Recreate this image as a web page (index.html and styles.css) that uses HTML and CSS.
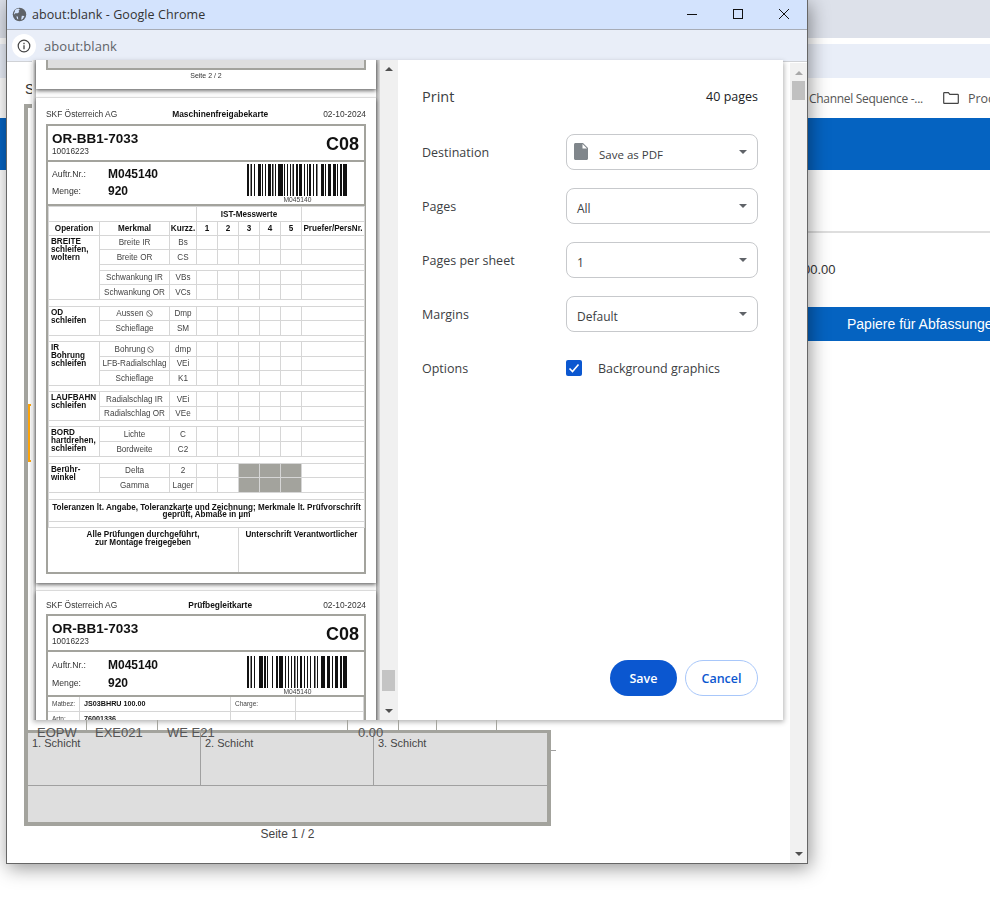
FILE: index.html
```html
<!DOCTYPE html>
<html lang="en">
<head>
<meta charset="utf-8">
<title>about:blank - Google Chrome</title>
<link rel="stylesheet" href="styles.css">
</head>
<body>
<div class="backwin">
  <div class="b-title"></div>
  <div class="b-gap"></div>
  <div class="b-addr"></div>
  <div class="b-marks">
    <span class="b-mark chan">Channel Sequence -...</span>
    <svg class="folder" viewBox="0 0 16 12"><path d="M.7 2V1.200C.7.900.900.700 1.200.700h4.200l1.400 1.600h7.900c.4 0 .6.200.6.600v7.900c0 .4-.2.600-.6.600H1.200c-.3 0-.5-.2-.5-.6z" fill="none" stroke="#444" stroke-width="1.200"/></svg>
    <span class="b-mark">Proc</span>
  </div>
  <div class="b-bar"></div>
  <div class="b-rule"></div>
  <div class="b-amount">00.00</div>
  <div class="b-btn">Papiere für Abfassunge</div>
</div>

<div class="popup">
  <div class="titlebar">
    <svg class="globe" viewBox="0 0 16 16"><circle cx="8" cy="8" r="7.200" fill="#5f6368"/><path d="M3.200 3.400c1-1 2.400-1.700 3.800-1.800l1.300 1-1.300 1.400.7 1.300-1.700 1.300-2.600.1-.6 1.400 2 2 1.500.1.300 3-1.200-.6-.9-2.900-2.300-2.300c0-1.100.3-2.100 1-3zM10.500 9.300l2.800.4-1.800 3-1.800.9z" fill="#d3e3fd"/></svg>
    <span class="title">about:blank - Google Chrome</span>
    <div class="winctl">
      <svg viewBox="0 0 10 10"><path d="M0 5.500h10" stroke="#111" fill="none"/></svg>
      <svg viewBox="0 0 10 10"><rect x=".5" y=".5" width="9" height="9" stroke="#111" fill="none"/></svg>
      <svg viewBox="0 0 10 10"><path d="M0 0l10 10M10 0L0 10" stroke="#111" fill="none"/></svg>
    </div>
  </div>
  <div class="addressbar">
    <span class="infobadge"><svg viewBox="0 0 14 14"><circle cx="7" cy="7" r="5.800" fill="none" stroke="#444" stroke-width="1.200"/><path d="M7 6.200v4M7 3.800v1.400" stroke="#444" stroke-width="1.300"/></svg></span>
    <span class="address">about:blank</span>
  </div>

  <div class="behind">
    <span class="behind-s">S</span>
    <div class="behind-frame"></div>
    <div class="behind-rail"></div>
    <div class="behind-row">
      <div>EOPW</div><div>EXE021</div><div>WE E21</div><div>0.00</div><div></div><div></div><div></div>
    </div>
    <div class="shift-box">
      <div class="shift-cell">1. Schicht</div>
      <div class="shift-cell">2. Schicht</div>
      <div class="shift-cell">3. Schicht</div>
      <div class="shift-foot"></div>
      <i class="shift-tick"></i>
    </div>
    <div class="behind-page">Seite 1 / 2</div>
    <div class="outer-scroll">
      <svg viewBox="0 0 8 4"><path d="M0 4h8L4 0z" fill="#a8a8a8"/></svg>
      <div class="outer-thumb"></div>
      <svg class="arrow-bottom" viewBox="0 0 8 4"><path d="M0 0h8L4 4z" fill="#505050"/></svg>
    </div>
  </div>

  <div class="dialog">
    <div class="preview">
      <div class="pages">
        <div class="sheet sheet-top">
          <div class="top-box"></div>
          <div class="pageno">Seite 2 / 2</div>
        </div>

        <div class="sheet sheet-full">
          <div class="doc-head"><span>SKF Österreich AG</span><b>Maschinenfreigabekarte</b><span>02-10-2024</span></div>
          <div class="frame">
            <div class="part-row">
              <div><div class="part-no">OR-BB1-7033</div><div class="part-sub">10016223</div></div>
              <div class="part-code">C08</div>
            </div>
            <div class="order-row">
              <div class="order-grid">
                <span class="o-label">Auftr.Nr.:</span><span class="o-val">M045140</span>
                <span class="o-label">Menge:</span><span class="o-val">920</span>
              </div>
              <div class="barcode-wrap">
                <svg class="barcode" viewBox="0 0 101 32" preserveAspectRatio="none"><path d="M0 0h2v32H0zM3.500 0H5v32H3.500zM7 0h1v32H7zM11 0h3v32h-3zM15 0h1v32h-1zM18 0h1v32h-1zM21 0h3v32h-3zM25 0h1.500v32H25zM28 0h1v32h-1zM31 0h5v32h-5zM37 0h1v32h-1zM40 0h1v32h-1zM43 0h1v32h-1zM45.500 0H47v32h-1.500zM49 0h2v32h-2zM52 0h3v32h-3zM57 0h1v32h-1zM60 0h1v32h-1zM62 0h2v32h-2zM66 0h1v32h-1zM69 0h1.500v32H69zM74 0h3v32h-3zM78 0h1v32h-1zM81 0h3v32h-3zM86 0h3v32h-3zM90 0h1v32h-1zM93 0h2v32h-2zM96 0h4v32h-4z"/></svg>
                <div class="barcode-text">M045140</div>
              </div>
            </div>
            <table class="sheet-table">
              <colgroup><col class="c-op"><col class="c-mk"><col class="c-kz"><col class="c-n"><col class="c-n"><col class="c-n"><col class="c-n"><col class="c-n"><col class="c-pr"></colgroup>
              <tr class="h15"><td colspan="3" class="plain"></td><th colspan="5">IST-Messwerte</th><td></td></tr>
              <tr class="h14"><th>Operation</th><th>Merkmal</th><th>Kurzz.</th><th>1</th><th>2</th><th>3</th><th>4</th><th>5</th><th>Pruefer/PersNr.</th></tr>
              <tr class="h14"><td rowspan="5" class="op">BREITE<br>schleifen,<br>woltern</td><td>Breite IR</td><td>Bs</td><td></td><td></td><td></td><td></td><td></td><td></td></tr>
              <tr class="h15"><td>Breite OR</td><td>CS</td><td></td><td></td><td></td><td></td><td></td><td></td></tr>
              <tr class="h6"><td colspan="8"></td></tr>
              <tr class="h14"><td>Schwankung IR</td><td>VBs</td><td></td><td></td><td></td><td></td><td></td><td></td></tr>
              <tr class="h15"><td>Schwankung OR</td><td>VCs</td><td></td><td></td><td></td><td></td><td></td><td></td></tr>
              <tr class="h7"><td colspan="9"></td></tr>
              <tr class="h14"><td rowspan="2" class="op">OD<br>schleifen</td><td>Aussen <svg class="nosym" viewBox="0 0 8 8"><circle cx="4" cy="4" r="3.300"/><path d="M1.700 1.700l4.600 4.600"/></svg></td><td>Dmp</td><td></td><td></td><td></td><td></td><td></td><td></td></tr>
              <tr class="h15"><td>Schieflage</td><td>SM</td><td></td><td></td><td></td><td></td><td></td><td></td></tr>
              <tr class="h6"><td colspan="9"></td></tr>
              <tr class="h15"><td rowspan="3" class="op">IR<br>Bohrung<br>schleifen</td><td>Bohrung <svg class="nosym" viewBox="0 0 8 8"><circle cx="4" cy="4" r="3.300"/><path d="M1.700 1.700l4.600 4.600"/></svg></td><td>dmp</td><td></td><td></td><td></td><td></td><td></td><td></td></tr>
              <tr class="h14"><td>LFB-Radialschlag</td><td>VEi</td><td></td><td></td><td></td><td></td><td></td><td></td></tr>
              <tr class="h15"><td>Schieflage</td><td>K1</td><td></td><td></td><td></td><td></td><td></td><td></td></tr>
              <tr class="h6"><td colspan="9"></td></tr>
              <tr class="h15"><td rowspan="2" class="op">LAUFBAHN<br>schleifen</td><td>Radialschlag IR</td><td>VEi</td><td></td><td></td><td></td><td></td><td></td><td></td></tr>
              <tr class="h14"><td>Radialschlag OR</td><td>VEe</td><td></td><td></td><td></td><td></td><td></td><td></td></tr>
              <tr class="h6"><td colspan="9"></td></tr>
              <tr class="h15"><td rowspan="2" class="op">BORD<br>hartdrehen,<br>schleifen</td><td>Lichte</td><td>C</td><td></td><td></td><td></td><td></td><td></td><td></td></tr>
              <tr class="h15"><td>Bordweite</td><td>C2</td><td></td><td></td><td></td><td></td><td></td><td></td></tr>
              <tr class="h7"><td colspan="9"></td></tr>
              <tr class="h14"><td rowspan="2" class="op">Berühr-<br>winkel</td><td>Delta</td><td>2</td><td></td><td></td><td class="dark"></td><td class="dark"></td><td class="dark"></td><td></td></tr>
              <tr class="h15"><td>Gamma</td><td>Lager</td><td></td><td></td><td class="dark"></td><td class="dark"></td><td class="dark"></td><td></td></tr>
              <tr class="h7"><td colspan="9"></td></tr>
              <tr class="h22"><th colspan="9" class="note">Toleranzen lt. Angabe, Toleranzkarte und Zeichnung; Merkmale lt. Prüfvorschrift geprüft, Abmaße in µm</th></tr>
              <tr class="h6"><td colspan="9"></td></tr>
            </table>
            <div class="sign-row">
              <div>Alle Prüfungen durchgeführt,<br>zur Montage freigegeben</div>
              <div>Unterschrift Verantwortlicher</div>
            </div>
          </div>
        </div>

        <div class="sheet sheet-cut">
          <div class="doc-head"><span>SKF Österreich AG</span><b>Prüfbegleitkarte</b><span>02-10-2024</span></div>
          <div class="frame">
            <div class="part-row">
              <div><div class="part-no">OR-BB1-7033</div><div class="part-sub">10016223</div></div>
              <div class="part-code">C08</div>
            </div>
            <div class="order-row">
              <div class="order-grid">
                <span class="o-label">Auftr.Nr.:</span><span class="o-val">M045140</span>
                <span class="o-label">Menge:</span><span class="o-val">920</span>
              </div>
              <div class="barcode-wrap">
                <svg class="barcode" viewBox="0 0 101 32" preserveAspectRatio="none"><path d="M0 0h2v32H0zM3.500 0H5v32H3.500zM7 0h1v32H7zM12 0h4v32h-4zM17 0h2v32h-2zM20 0h1v32h-1zM25 0h1v32h-1zM29 0h2v32h-2zM32 0h4v32h-4zM38 0h1v32h-1zM41 0h1v32h-1zM44 0h1v32h-1zM47 0h1.500v32H47zM50 0h1v32h-1zM53 0h2v32h-2zM57 0h1v32h-1zM60 0h1v32h-1zM63 0h1v32h-1zM67 0h1.500v32H67zM70 0h1v32h-1zM74 0h4v32h-4zM80 0h3v32h-3zM85 0h1v32h-1zM88 0h3v32h-3zM93 0h2v32h-2zM96 0h4v32h-4z"/></svg>
                <div class="barcode-text">M045140</div>
              </div>
            </div>
            <div class="mat-row">
              <span class="m-label">Matbez:</span><b>JS03BHRU 100.00</b><span class="m-label">Charge:</span><span></span>
            </div>
            <div class="mat-row">
              <span class="m-label">Artn:</span><b>76001336</b><span></span><span></span>
            </div>
          </div>
        </div>
      </div>
      <div class="preview-scroll">
        <svg viewBox="0 0 8 4"><path d="M0 4h8L4 0z" fill="#505050"/></svg>
        <div class="preview-thumb"></div>
        <svg viewBox="0 0 8 4"><path d="M0 0h8L4 4z" fill="#505050"/></svg>
      </div>
    </div>

    <div class="settings">
      <div class="set-head"><span class="set-title">Print</span><span class="set-count">40 pages</span></div>
      <div class="set-row">
        <span class="set-label">Destination</span>
        <div class="select"><svg class="fileicon" viewBox="0 0 14 17"><path d="M1.500 0H9l5 5v10.500c0 .8-.7 1.500-1.500 1.500h-11C.7 17 0 16.300 0 15.500v-14C0 .7.7 0 1.500 0z" fill="#80868b"/><path d="M8.500 1v4.500H13" fill="#fff"/></svg><span class="sel-text pdf">Save as PDF</span><i class="caret"></i></div>
      </div>
      <div class="set-row">
        <span class="set-label">Pages</span>
        <div class="select"><span class="sel-text">All</span><i class="caret"></i></div>
      </div>
      <div class="set-row">
        <span class="set-label">Pages per sheet</span>
        <div class="select"><span class="sel-text">1</span><i class="caret"></i></div>
      </div>
      <div class="set-row">
        <span class="set-label">Margins</span>
        <div class="select"><span class="sel-text">Default</span><i class="caret"></i></div>
      </div>
      <div class="set-row">
        <span class="set-label">Options</span>
        <div class="check-line">
          <span class="check"><svg viewBox="0 0 16 16"><path d="M3.500 8.500l3 3 6-7" fill="none" stroke="#fff" stroke-width="1.600"/></svg></span>
          <span class="check-text">Background graphics</span>
        </div>
      </div>
      <div class="actions">
        <button class="btn-save">Save</button>
        <button class="btn-cancel">Cancel</button>
      </div>
    </div>
  </div>
</div>
</body>
</html>
```
FILE: styles.css
```css
* { box-sizing: border-box; }
html, body { margin: 0; padding: 0; height: 906px; overflow: hidden; background: #fff; }
body { position: relative; width: 990px; font-family: "Liberation Sans", Arial, sans-serif; color: #222; }

/* Window behind */
.backwin { position: absolute; inset: 0; }
.b-title { height: 38px; background: #dde1ea; }
.b-gap { height: 6px; background: #fff; }
.b-addr { height: 34px; background: #e9eef8; }
.b-marks { height: 40px; display: flex; align-items: center; padding-left: 809px; font: 12.500px "Open Sans", sans-serif; color: #555; white-space: nowrap; overflow: hidden; }
.chan { font-size: 12px; letter-spacing: -.3px; }
.folder { width: 16px; height: 12px; margin: 0 9px 0 20px; flex: none; }
.b-bar { height: 52px; background: #0563c1; }
.b-rule { height: 2px; margin: 61px 0 0 807px; background: #dedede; }
.b-amount { position: absolute; left: 803px; top: 262px; font-size: 13px; color: #333; }
.b-btn { position: absolute; left: 807px; right: 0; top: 307px; height: 34px; background: #0563c1; color: #fff; font-size: 14px; line-height: 34px; padding-left: 40px; white-space: nowrap; overflow: hidden; }

/* Popup */
.popup { position: absolute; left: 6px; top: 0; width: 802px; height: 864px; background: #fff; border: 1px solid #666; border-top: 0; box-shadow: 2px 4px 18px rgba(0,0,0,.42); }
.titlebar { height: 30px; background: #d3e3fd; border-bottom: 1px solid #a7acb6; display: flex; align-items: center; padding: 0 18px 1px 5px; }
.globe { width: 15px; height: 15px; flex: none; }
.title { margin-left: 5px; font: 12.500px "Open Sans", sans-serif; color: #333; letter-spacing: .08px; }
.winctl { margin-left: auto; display: flex; gap: 36px; }
.winctl svg { width: 10px; height: 10px; display: block; }
.addressbar { height: 32px; background: #e9eef8; border-bottom: 1px solid #d0d2d6; display: flex; align-items: center; padding-left: 5px; }
.infobadge { width: 24px; height: 24px; border-radius: 50%; background: #fff; display: flex; align-items: center; justify-content: center; }
.infobadge svg { width: 14px; height: 14px; }
.address { margin-left: 8px; font: 13px "Open Sans", sans-serif; color: #5f6368; letter-spacing: .05px; }

/* Page beneath the dialog */
.behind { position: absolute; left: 0; right: 0; top: 60px; bottom: 0; }
.behind-s { position: absolute; left: 18px; top: 21px; font-size: 14px; color: #333; }
.behind-frame { position: absolute; left: 17px; top: 44px; width: 8px; height: 629px; border: solid #a3a39d; border-width: 4px 0 0 4px; }
.behind-rail { position: absolute; left: 21px; top: 344px; width: 3px; height: 58px; border: solid #ffa50a; border-width: 2px 0 2px 2px; }
.behind-row { position: absolute; z-index: 1; left: 17px; top: 660px; width: 527px; height: 13px; border-bottom: 3px solid #a3a39d; padding-left: 4px; display: grid; grid-template-columns: 59px 71px 190px 51px 38px 60px 1fr; font-size: 13px; line-height: 15px; color: #555; white-space: nowrap; }
.behind-row div { height: 10px; border-right: 1px solid #a3a39d; padding: 5px 0 0 9px; }
.behind-row div:nth-child(2) { padding-left: 8px; }
.behind-row div:nth-child(4) { padding-left: 10px; }
.behind-row div:last-child { border-right: 0; }
.shift-box { position: absolute; left: 17px; top: 673px; width: 527px; height: 93px; border: solid #a3a39d; border-width: 0 4px 4px; background: #dedede; display: grid; grid-template-columns: 173px 173px 1fr; grid-template-rows: 53px 1fr; font-size: 11px; color: #444; }
.shift-cell { padding: 4px 0 0 4px; border-right: 1px solid #a0a0a0; border-bottom: 1px solid #a0a0a0; }
.shift-cell:nth-child(3) { border-right: 0; }
.shift-foot { grid-column: 1 / -1; }
.shift-tick { position: absolute; left: 523px; top: 17px; width: 5px; height: 1px; background: #a0a0a0; }
.behind-page { position: absolute; left: 17px; top: 767px; width: 527px; text-align: center; font-size: 12px; color: #444; }
.outer-scroll { position: absolute; right: 0; top: 3px; width: 17px; height: 800px; background: #f1f1f1; display: flex; flex-direction: column; align-items: center; padding-top: 8px; }
.outer-scroll svg { width: 8px; height: 4px; flex: none; }
.outer-thumb { width: 13px; height: 19px; margin-top: 6px; background: #c0c0c0; }
.outer-scroll .arrow-bottom { margin-top: auto; margin-bottom: 7px; }

/* Print dialog */
.dialog { position: absolute; left: 25px; top: 60px; width: 751px; height: 660px; display: flex; background: #fff; box-shadow: 1px 2px 5px rgba(0,0,0,.3); }
.preview { width: 366px; height: 660px; display: flex; overflow: hidden; background: #fff; }
.pages { width: 348px; flex: none; overflow: hidden; padding: 0 4px; height: 660px; background: linear-gradient(to right, #f4f4f4, #b4b4b4) left top / 4px 100% no-repeat, linear-gradient(to right, #a8a8a8, #dcdcdc) right top / 4px 100% no-repeat, #fff; }
.sheet { width: 340px; background: #fff; box-shadow: 0 0 1px #777, 0 2px 4px rgba(0,0,0,.55); padding: 0 10px; filter: blur(.3px); }
.sheet-top { height: 29px; margin-bottom: 9px; }
.top-box { height: 10px; background: #dedede; border: solid #a3a39d; border-width: 0 2px 2px; }
.pageno { text-align: center; font-size: 7px; margin-top: 2px; color: #333; }
.sheet-full { height: 485px; padding-top: 11px; margin-bottom: 8px; }
.sheet-cut { height: 200px; padding-top: 9px; }
.sheet-cut .doc-head { height: 14px; }
.doc-head { display: flex; justify-content: space-between; font-size: 8.400px; line-height: 10px; height: 15px; color: #333; white-space: nowrap; }
.doc-head b { color: #111; }
.frame { border: 2px solid #a3a39d; }
.part-row { height: 36px; padding: 6px 5px 0 4px; display: flex; justify-content: space-between; border-bottom: 2px solid #a3a39d; }
.part-no { font-size: 13.500px; font-weight: bold; line-height: 14px; color: #111; }
.part-sub { font-size: 8.300px; line-height: 9px; margin-top: 1px; color: #333; }
.part-code { font-size: 18px; font-weight: bold; line-height: 20px; margin-top: 2px; color: #111; }
.order-row { height: 44px; display: flex; justify-content: space-between; border-bottom: 2px solid #a3a39d; padding: 0 16px 0 4px; }
.order-grid { display: grid; grid-template-columns: 56px auto; grid-auto-rows: 17px; align-content: center; align-items: center; padding-bottom: 2px; }
.sheet-cut .order-row { height: 45px; }
.sheet-cut .order-grid { grid-auto-rows: 18px; padding-bottom: 0; }
.sheet-cut .barcode-wrap { padding-top: 4px; }
.o-label { font-size: 8.700px; color: #333; }
.o-val { font-size: 12px; font-weight: bold; color: #111; }
.barcode-wrap { width: 101px; padding-top: 2px; }
.barcode { display: block; width: 101px; height: 32px; fill: #111; }
.barcode-text { text-align: center; font-size: 6.700px; line-height: 7px; color: #444; }

.sheet-table { border-collapse: collapse; table-layout: fixed; width: 316px; font-size: 8.150px; color: #444; }
.c-op { width: 51px; } .c-mk { width: 70px; } .c-kz { width: 27px; } .c-n { width: 21px; } .c-pr { width: 63px; }
.sheet-table td, .sheet-table th { padding: 0; border: 1px solid #d6d6d6; text-align: center; overflow: hidden; white-space: nowrap; line-height: 9px; }
.sheet-table th { color: #111; font-size: 8.150px; }
.sheet-table .op { text-align: left; vertical-align: top; padding: 2px 0 0 2px; font-weight: bold; color: #111; line-height: 7.800px; }
.sheet-table .dark { background: #a3a39d; }
.sheet-table .note { white-space: normal; line-height: 7px; padding: 4px 0 0; vertical-align: top; }
.nosym { width: 7px; height: 7px; fill: none; stroke: #555; stroke-width: .8; vertical-align: -1px; }
.h6 { height: 6px; } .h7 { height: 7px; } .h14 { height: 14px; } .h15 { height: 15px; } .h22 { height: 22px; }
.sign-row { display: grid; grid-template-columns: 191px 1fr; height: 44px; font-size: 8.150px; font-weight: bold; color: #111; text-align: center; line-height: 8px; }
.sign-row div { padding-top: 3px; }
.sign-row div:first-child { border-right: 1px solid #d6d6d6; }
.mat-row { display: grid; grid-template-columns: 32px 151px 65px 1fr; height: 15px; font-size: 6.500px; line-height: 14px; color: #111; border-bottom: 1px solid #d6d6d6; }
.mat-row > * { border-right: 1px solid #d6d6d6; padding-left: 4px; }
.mat-row b { font-size: 7.200px; }
.m-label { color: #444; }

.preview-scroll { width: 18px; height: 660px; background: #f0f0f0; display: flex; flex-direction: column; align-items: center; justify-content: space-between; padding: 7px 0 7px; position: relative; }
.preview-scroll svg { width: 8px; height: 4px; }
.preview-thumb { position: absolute; left: 2px; top: 610px; width: 13px; height: 21px; background: #c4c4c4; }

/* Settings */
.settings { width: 385px; height: 660px; padding: 0 25px 0 24px; position: relative; font-family: "Open Sans", sans-serif; color: #3c4043; }
.set-head { height: 74px; display: flex; justify-content: space-between; padding-top: 26px; line-height: 22px; }
.set-title { font-size: 14.500px; }
.set-count { font-size: 12.500px; color: #202124; line-height: 22px; }
.set-row { height: 54px; display: flex; }
.set-label { width: 144px; font-size: 12.500px; line-height: 38px; }
.select { width: 192px; height: 36px; border: 1px solid #c7c9cc; border-radius: 8px; display: flex; align-items: center; padding: 5px 0 0 10px; font-size: 12px; position: relative; color: #3c4043; }
.sel-text.pdf { margin-left: 11px; font-size: 11.500px; }
.fileicon { width: 14px; height: 17px; margin-left: -3px; margin-top: -6px; }
.caret { position: absolute; right: 10px; top: 15px; width: 0; height: 0; border: 4px solid transparent; border-top: 4px solid #5f6368; border-bottom: 0; }
.check-line { display: flex; align-items: center; height: 36px; }
.check { width: 16px; height: 16px; background: #0b57d0; border-radius: 2px; display: block; }
.check svg { display: block; }
.check-text { margin-left: 16px; font-size: 12.500px; letter-spacing: -.03px; }
.actions { position: absolute; right: 25px; top: 600px; display: flex; gap: 8px; }
.actions button { height: 36px; border-radius: 18px; font: 600 12.500px "Open Sans", sans-serif; cursor: pointer; padding: 0; }
.btn-save { width: 67px; background: #0b57d0; color: #fff; border: 0; }
.btn-cancel { width: 73px; background: #fff; color: #0b57d0; border: 1px solid #a8c7fa; }
```
